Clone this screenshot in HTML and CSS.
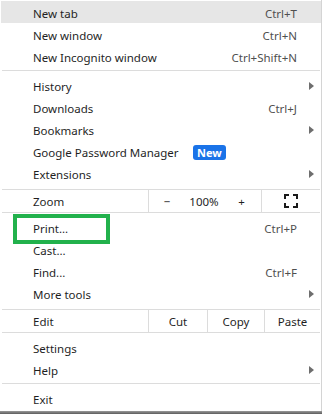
FILE: index.html
```html
<!DOCTYPE html>
<html lang="en">
<head>
  <meta charset="UTF-8">
  <meta name="viewport" content="width=device-width, initial-scale=1.0">
  <title>Chrome menu</title>
  <link rel="stylesheet" href="styles.css">
</head>
<body>

  <!-- Browser menu -->
  <div class="menu">
    <div class="item active"><span class="label">New tab</span><span class="key">Ctrl+T</span></div>
    <div class="item"><span class="label">New window</span><span class="key">Ctrl+N</span></div>
    <div class="item"><span class="label">New Incognito window</span><span class="key">Ctrl+Shift+N</span></div>

    <div class="sep"></div>

    <div class="item"><span class="label">History</span><span class="arrow"></span></div>
    <div class="item"><span class="label">Downloads</span><span class="key">Ctrl+J</span></div>
    <div class="item"><span class="label">Bookmarks</span><span class="arrow"></span></div>
    <div class="item"><span class="label">Google Password Manager</span><span class="badge">New</span></div>
    <div class="item"><span class="label">Extensions</span><span class="arrow"></span></div>

    <!-- Zoom row -->
    <div class="split zoom">
      <span class="split-label">Zoom</span>
      <div class="zoom-ctrl">
        <span>&minus;</span>
        <span>100%</span>
        <span>+</span>
      </div>
      <div class="full">
        <svg width="14" height="14" viewBox="0 0 14 14">
          <path d="M1 5V1h4M9 1h4v4M13 9v4H9M5 13H1V9" fill="none" stroke="#1a1a1a" stroke-width="2"/>
        </svg>
      </div>
    </div>

    <div class="item"><span class="label">Print...</span><span class="key">Ctrl+P</span></div>
    <div class="item"><span class="label">Cast...</span></div>
    <div class="item"><span class="label">Find...</span><span class="key">Ctrl+F</span></div>
    <div class="item"><span class="label">More tools</span><span class="arrow"></span></div>

    <!-- Edit row -->
    <div class="split edit">
      <span class="split-label">Edit</span>
      <span class="cell cut">Cut</span>
      <span class="cell copy">Copy</span>
      <span class="cell paste">Paste</span>
    </div>

    <div class="item"><span class="label">Settings</span></div>
    <div class="item"><span class="label">Help</span><span class="arrow"></span></div>

    <div class="sep"></div>

    <div class="item"><span class="label">Exit</span></div>

    <div class="shadow"></div>

    <!-- highlight box drawn over the Print item -->
    <div class="mark"></div>
  </div>

</body>
</html>
```

FILE: styles.css
```css
body {
  margin: 0;
  padding: 0;
  background: #fff;
  font-family: 'Noto Sans', 'Open Sans', sans-serif;
  font-size: 11.5px;
  color: #1f1f1f;
}

/* Menu container */
.menu {
  position: relative;
  width: 322px;
  height: 414px;
  padding-top: 1px;
  box-sizing: border-box;
  border-right: 1px solid #d4d4d4;
  display: flex;
  flex-direction: column;
}

.item {
  display: flex;
  align-items: center;
  height: 22px;
  box-sizing: border-box;
  margin-left: 1px;
  padding: 2px 24px 0 32px;
}

.item.active {
  background-color: #e6e6e6;
}

.label {
  flex: 1;
}

.key {
  color: #4f4f4f;
}

.arrow {
  width: 0;
  height: 0;
  border-left: 5px solid #6e6e6e;
  border-top: 4px solid transparent;
  border-bottom: 4px solid transparent;
  margin-right: -17px;
}

.badge {
  position: absolute;
  left: 193px;
  background-color: #1a73e8;
  color: #fff;
  font-weight: bold;
  font-size: 11px;
  line-height: 15px;
  padding: 0 4px;
  border-radius: 3px;
}

.sep {
  height: 1px;
  margin: 3px 1px 3px 2px;
  background-color: #dcdcdc;
}

/* Zoom and Edit rows */
.split {
  display: flex;
  height: 21px;
  margin: 5px 1px 3px 2px;
  padding-top: 1px;
  box-sizing: content-box;
  border-top: 1px solid #dcdcdc;
  border-bottom: 1px solid #dcdcdc;
}

.split-label {
  width: 146px;
  padding-left: 31px;
  box-sizing: border-box;
  display: flex;
  align-items: center;
}

.zoom-ctrl {
  width: 112px;
  border-left: 1px solid #dcdcdc;
  margin-top: -1px;
  padding-top: 1px;
  display: grid;
  grid-template-columns: 36px 38px 37px;
  align-items: center;
  justify-items: center;
}

.full {
  flex: 1;
  border-left: 1px solid #dcdcdc;
  margin-top: -1px;
  display: flex;
  align-items: center;
  justify-content: center;
}

.cell {
  border-left: 1px solid #dcdcdc;
  margin-top: -1px;
  padding-top: 1px;
  display: flex;
  align-items: center;
  justify-content: center;
}

.cut {
  width: 58px;
}

.copy {
  width: 56px;
}

.paste {
  flex: 1;
}

.shadow {
  margin-top: auto;
  height: 3px;
  background: linear-gradient(#9a9a9a, #5c5c5c);
  margin-right: -1px;
}

/* Green annotation box */
.mark {
  position: absolute;
  left: 13px;
  top: 214px;
  width: 97px;
  height: 30px;
  box-sizing: border-box;
  border: 4px solid #22b14c;
}
```
